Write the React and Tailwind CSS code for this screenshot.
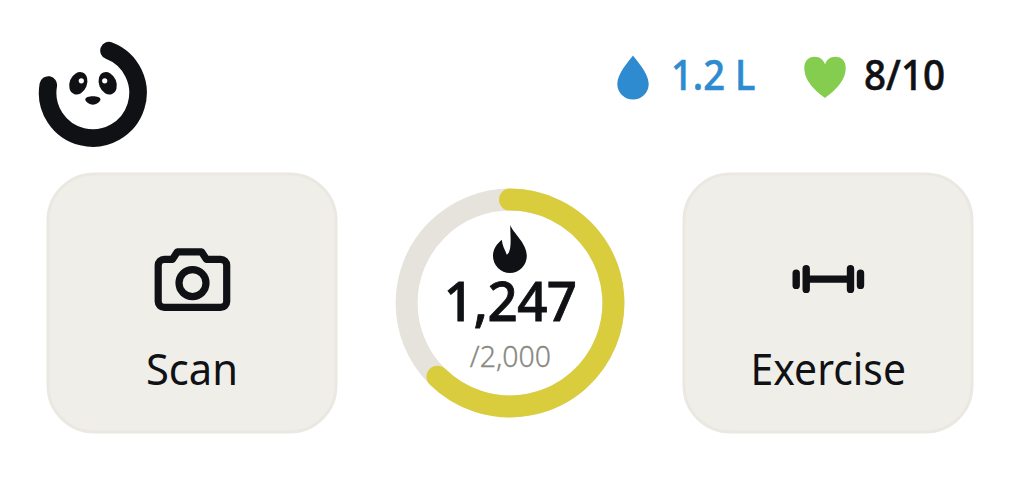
function PandaLogo() {
  return (
    <svg className="h-[110px] w-[110px] shrink-0" viewBox="37.7 37.7 110 110" fill="#101114">
      <path d="M48 84.7A45.2 45.2 0 1 0 108.7 50.3" fill="none" stroke="#101114" strokeWidth="17.6" strokeLinecap="round" />
      <ellipse cx="78" cy="83" rx="8.7" ry="11.6" transform="rotate(22 78 83)" />
      <ellipse cx="107.4" cy="83" rx="8.7" ry="11.6" transform="rotate(-22 107.4 83)" />
      <circle cx="81" cy="80.5" r="2.6" fill="#fff" />
      <circle cx="104.4" cy="80.5" r="2.6" fill="#fff" />
      <path d="M85 99.2C85 96.8 88.5 96 92.6 96S100.1 96.8 100.1 99.2C100.1 101.6 95.5 104.4 92.6 104.4S85 101.6 85 99.2Z" />
    </svg>
  );
}

function Drop() {
  return (
    <svg className="h-[46px] w-[34px]" viewBox="616 54 34 46" fill="#2f8bd0">
      <path d="M633 55.5C637.5 61.5 648.7 73.5 648.7 84A15.7 15.5 0 0 1 617.3 84C617.3 73.5 628.5 61.5 633 55.5Z" />
    </svg>
  );
}

function Heart() {
  return (
    <svg className="h-[44px] w-[44px]" viewBox="803 55 44 44" fill="#84cd4e">
      <path d="M825 98C817 92 804.3 82 804.3 68C804.3 61 808.5 56.8 814.5 56.8C819.5 56.8 823.5 59.5 825 64.5C826.5 59.5 830.5 56.8 835.5 56.8C841.5 56.8 845.7 61 845.7 68C845.7 82 833 92 825 98Z" />
    </svg>
  );
}

function Flame() {
  return (
    <svg className="h-[50px] w-[36px]" viewBox="492 224 36 50" fill="#101114">
      <path d="M510.2 225C513 233 526.8 243 526.8 256A16.9 17 0 0 1 493 256C493 249 496.5 244.5 501.8 239.8C502 245 505 250 506.8 254.8C512 251 510.5 240 510.2 225Z" />
    </svg>
  );
}

function Camera() {
  return (
    <svg className="h-[66px] w-[80px]" viewBox="152.3 247.4 80 66" fill="none" stroke="#101114" strokeWidth="7.2" strokeLinejoin="round">
      <path d="M164 259.2H172.3L177.2 251.7H201.3L206.2 259.2H220.5A6 6 0 0 1 226.5 265.2V301.3A6 6 0 0 1 220.5 307.3H164A6 6 0 0 1 158 301.3V265.2A6 6 0 0 1 164 259.2Z" />
      <circle cx="192.3" cy="283" r="13.5" />
    </svg>
  );
}

function Dumbbell() {
  return (
    <svg className="h-[66px] w-[80px]" viewBox="788.3 247.4 80 66" fill="none" stroke="#101114" strokeWidth="7.4" strokeLinecap="round">
      <path d="M796 273V285.3M806 268.7V289.3M850.3 268.7V289.3M860.3 273V285.3M806 279H850" />
    </svg>
  );
}

function Card({ icon, className, children }) {
  return (
    <button className={`flex h-[261px] w-[291px] flex-col items-center rounded-[48px] border-3 border-[#ebe8e2] bg-[#efeee9] pt-[72px] ${className}`}>
      {icon}
      <span className="mt-[25px] flex h-[60px] items-center justify-center text-[43px] leading-[60px] whitespace-nowrap">
        {children}
      </span>
    </button>
  );
}

function CalorieRing() {
  return (
    <div className="grid h-[230px] w-[230px] place-items-center">
      <svg className="col-start-1 row-start-1 h-[230px] w-[230px]" viewBox="395 188 230 230" fill="none" strokeWidth="22">
        <circle cx="510" cy="303" r="103.4" stroke="#e6e3dc" />
        <path d="M510 199.6A103.4 103.4 0 1 1 437.5 376.7" stroke="#d9cd3e" strokeLinecap="round" />
      </svg>
      <div className="col-start-1 row-start-1 flex h-[230px] flex-col items-center pt-[36px]">
        <Flame />
        <span className="-mt-[4px] h-[60px] scale-x-96 text-[55px] leading-[60px] font-medium tracking-[-0.5px] [-webkit-text-stroke:0.9px_#101114]">1,247</span>
        <span className="mt-[6px] h-[40px] scale-x-98 text-[29px] leading-[40px] font-light text-[#8a8982] [-webkit-text-stroke:0.3px_#8a8982]">/2,000</span>
      </div>
    </div>
  );
}

export default function App() {
  return (
    <main className="h-[480px] w-[1020px] overflow-hidden bg-white font-['Noto_Sans','Open_Sans',sans-serif] text-[#101114]">
      <header className="flex h-[172px] items-start justify-between pt-[38px] pr-[75px] pl-[38px]">
        <PandaLogo />
        <div className="flex pt-[16px] text-[41px] leading-[41px] font-medium whitespace-nowrap">
          <div className="flex w-[187px] text-[#2f8bd0]">
            <Drop />
            <span className="ml-[21px] origin-left scale-x-93 [-webkit-text-stroke:0.6px_#2f8bd0]">1.2 L</span>
          </div>
          <div className="flex w-[142px]">
            <span className="pt-px"><Heart /></span>
            <span className="ml-[17px] origin-left scale-x-94 [-webkit-text-stroke:0.6px_#101114]">8/10</span>
          </div>
        </div>
      </header>
      <section className="flex items-start justify-between px-[46px]">
        <Card icon={<Camera />} className="translate-x-[0.5px] translate-y-[0.5px]">
          <span className="scale-x-97">Scan</span>
        </Card>
        <div className="pt-[16px]">
          <CalorieRing />
        </div>
        <Card icon={<Dumbbell />} className="-translate-x-[0.5px] translate-y-[0.5px]">
          <span className="scale-x-95">Exercise</span>
        </Card>
      </section>
    </main>
  );
}
